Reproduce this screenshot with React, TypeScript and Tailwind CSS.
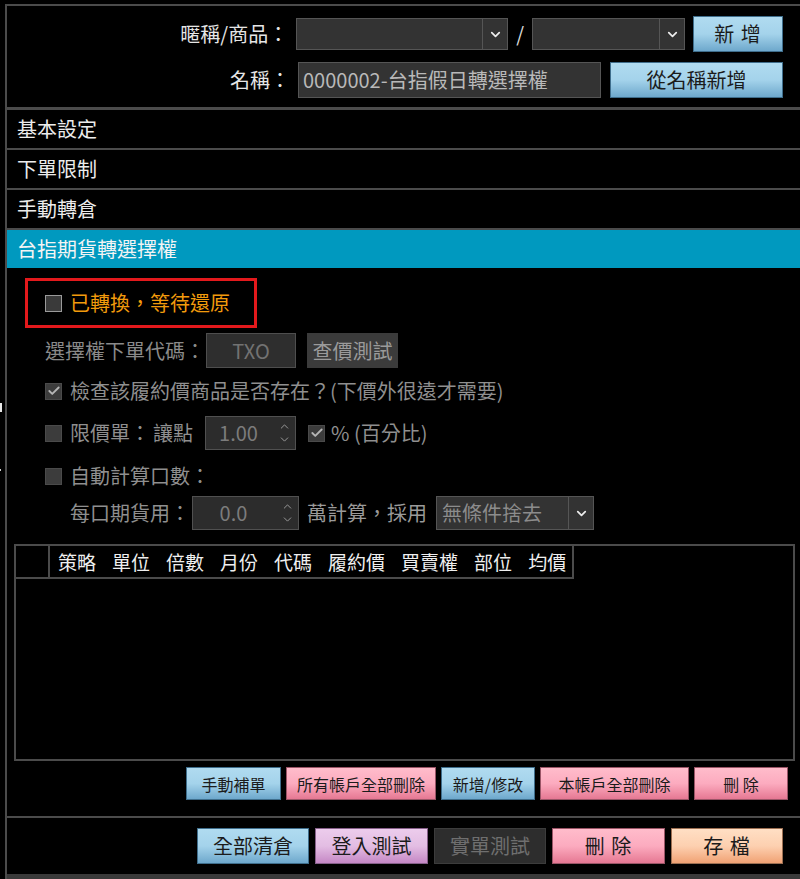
import React from 'react';
import { ChevronDown, ChevronUp, Check } from 'lucide-react';

const BTN: Record<string, string> = {
    blue: 'bg-linear-to-b from-[#b0dbf0] via-[#a4d3eb] to-[#6ea8cc] border-[#3f6e8c] text-[#1b1b1b]',
    pink: 'bg-linear-to-b from-[#ffbccb] via-[#fcabbf] to-[#e57893] border-[#9a5567] text-[#1b1b1b]',
    purple: 'bg-linear-to-b from-[#ecccec] via-[#e3bde3] to-[#c588c5] border-[#87608a] text-[#1b1b1b]',
    peach: 'bg-linear-to-b from-[#ffdfc4] via-[#fdd0b0] to-[#f0a274] border-[#9c6f52] text-[#1b1b1b]',
    dark: 'bg-[#2d2d2d] border-[#3c3c3c] text-[#6f6f6f]',
};

function Btn({ kind, className, children }: { kind: string; className: string; children: React.ReactNode }) {
    return (
        <div className={`flex shrink-0 items-center justify-center border leading-none ${BTN[kind]} ${className}`}>
            {children}
        </div>
    );
}

function Box({ checked, active }: { checked?: boolean; active?: boolean }) {
    return (
        <div
            className={`flex h-[17px] w-[17px] shrink-0 items-center justify-center border ${
                active ? 'border-[#9a9a9a] bg-[#3a3a3a]' : 'border-[#4a4a4a] bg-[#3c3c3c]'
            }`}
        >
            {checked ? <Check size={14} strokeWidth={3.2} className="text-[#b5b5b5]" /> : null}
        </div>
    );
}

function Select({ w, value }: { w: string; value?: string }) {
    return (
        <div className={`flex h-full ${w} border border-[#555] bg-[#333]`}>
            <div className="flex flex-1 items-center pl-[5px] text-[20px] leading-none text-[#8c8c8c]">{value}</div>
            <div className="flex w-[25px] items-center justify-center border-l border-[#555]">
                <ChevronDown size={15} strokeWidth={2.8} className="text-[#ececec]" />
            </div>
        </div>
    );
}

function Spin({ w, value }: { w: string; value: string }) {
    return (
        <div className={`flex h-full ${w} border border-[#505050] bg-[#2c2c2c]`}>
            <div className="flex flex-1 items-center justify-center pr-[2px] text-[20px] leading-none text-[#7c7c7c]">
                {value}
            </div>
            <div className="flex w-[22px] flex-col items-center justify-center">
                <ChevronUp size={13} strokeWidth={1.8} className="text-[#9a9a9a]" />
                <ChevronDown size={13} strokeWidth={1.8} className="text-[#9a9a9a]" />
            </div>
        </div>
    );
}

const SECTIONS = ['基本設定', '下單限制', '手動轉倉'];
const COLS = ['策略', '單位', '倍數', '月份', '代碼', '履約價', '買賣權', '部位', '均價'];

export default function App() {
    return (
        <div className="flex h-[879px] w-[800px] overflow-hidden bg-black font-['Noto_Sans_CJK_TC','Noto_Sans',sans-serif]">
            <div className="flex w-[5px] shrink-0 flex-col">
                <div className="mt-[403px] h-[9px] w-[2px] bg-[#e8e8e8]" />
                <div className="mt-[57px] h-[2px] w-[1px] bg-[#cfcfcf]" />
            </div>
            <div className="mt-[4px] flex flex-1 flex-col border-l-2 border-t-2 border-[#4b4b4b]">
                {/* header */}
                <div className="flex h-[104px] shrink-0 flex-col gap-[10px] border-b-[3px] border-[#4b4b4b] pr-[17px] pt-[10px]">
                    <div className="flex h-[36px] items-center justify-end">
                        <span className="mr-[8px] text-[20px] leading-none text-[#e6e6e6]">暱稱/商品：</span>
                        <div className="flex h-[32px] items-center">
                            <Select w="w-[212px]" />
                            <span className="mx-[8px] text-[20px] leading-none text-[#dcdcdc]">/</span>
                            <Select w="w-[153px]" />
                        </div>
                        <Btn kind="blue" className="ml-[8px] h-[36px] w-[90px] text-[20px] tracking-[1px]">
                            新 增
                        </Btn>
                    </div>
                    <div className="flex h-[36px] items-center justify-end">
                        <span className="mr-[8px] text-[20px] leading-none text-[#e6e6e6]">名稱：</span>
                        <div className="flex h-[36px] w-[303px] items-center border border-[#555] bg-[#333] pl-[4px] text-[20px] leading-none text-[#b9b9b9]">
                            0000002-台指假日轉選擇權
                        </div>
                        <Btn kind="blue" className="ml-[9px] h-[36px] w-[173px] text-[20px]">
                            從名稱新增
                        </Btn>
                    </div>
                </div>

                {/* sections */}
                {SECTIONS.map((s) => (
                    <div
                        key={s}
                        className="flex h-[40px] shrink-0 items-center border-b-2 border-[#4b4b4b] pl-[10px] text-[20px] leading-none text-[#ececec]"
                    >
                        {s}
                    </div>
                ))}
                <div className="flex h-[38px] shrink-0 items-center bg-[#0099bf] pl-[10px] text-[20px] leading-none text-[#f4f4f4]">
                    台指期貨轉選擇權
                </div>

                {/* content */}
                <div className="flex h-[550px] shrink-0 flex-col border-b-2 border-[#4b4b4b] pt-[10px]">
                    <div className="ml-[18px] flex h-[50px] w-[232px] items-center gap-[8px] border-[3px] border-[#e3191c] pl-[17px]">
                        <Box active />
                        <span className="text-[20px] leading-none text-[#f29b0c]">已轉換，等待還原</span>
                    </div>

                    <div className="ml-[38px] mt-[5px] flex h-[35px] items-center text-[20px] leading-none text-[#8a8a8a]">
                        <span className="w-[161px]">選擇權下單代碼：</span>
                        <div className="flex h-full w-[90px] items-center justify-center border border-[#4e4e4e] bg-[#2e2e2e] text-[#727272]">
                            TXO
                        </div>
                        <div className="ml-[11px] flex h-full w-[91px] items-center justify-center bg-[#3b3b3b] text-[#9a9a9a]">
                            查價測試
                        </div>
                    </div>

                    <div className="ml-[38px] mt-[2px] flex h-[42px] items-center gap-[8px] text-[20px] leading-none text-[#8f8f8f]">
                        <Box checked />
                        <span>檢查該履約價商品是否存在？(下價外很遠才需要)</span>
                    </div>

                    <div className="ml-[38px] mt-[4px] flex h-[34px] items-center text-[20px] leading-none text-[#8f8f8f]">
                        <Box />
                        <span className="ml-[8px] w-[83px]">限價單：</span>
                        <span className="w-[52px]">讓點</span>
                        <Spin w="w-[91px]" value="1.00" />
                        <div className="ml-[12px]">
                            <Box checked />
                        </div>
                        <span className="ml-[6px]">% (百分比)</span>
                    </div>

                    <div className="ml-[38px] mt-[6px] flex h-[40px] items-center gap-[8px] text-[20px] leading-none text-[#8f8f8f]">
                        <Box />
                        <span>自動計算口數：</span>
                    </div>

                    <div className="ml-[63px] flex h-[34px] items-center text-[20px] leading-none text-[#8f8f8f]">
                        <span className="w-[122px]">每口期貨用：</span>
                        <Spin w="w-[107px]" value="0.0" />
                        <span className="ml-[8px] w-[129px] text-[#9a9a9a]">萬計算，採用</span>
                        <Select w="w-[158px]" value="無條件捨去" />
                    </div>

                    {/* table */}
                    <div className="ml-[7px] mt-[14px] h-[217px] w-[781px] border-2 border-[#4b4b4b]">
                        <div className="flex h-[33px] w-[558px] border-b-2 border-r-2 border-[#4b4b4b]">
                            <div className="w-[34px] border-r-2 border-[#4b4b4b]" />
                            <div className="flex flex-1 items-center gap-[16px] pl-[8px] text-[19px] leading-none text-[#efefef]">
                                {COLS.map((c) => (
                                    <span key={c}>{c}</span>
                                ))}
                            </div>
                        </div>
                    </div>

                    <div className="mt-[6px] flex h-[33px] justify-end gap-[5px] pr-[12px] text-[16px]">
                        <Btn kind="blue" className="w-[95px]">手動補單</Btn>
                        <Btn kind="pink" className="w-[150px]">所有帳戶全部刪除</Btn>
                        <Btn kind="blue" className="w-[94px]">新增/修改</Btn>
                        <Btn kind="pink" className="w-[149px]">本帳戶全部刪除</Btn>
                        <Btn kind="pink" className="w-[94px]">刪 除</Btn>
                    </div>
                </div>

                {/* footer */}
                <div className="flex h-[56px] shrink-0 items-center justify-end gap-[6px] pr-[17px] text-[20px]">
                    <Btn kind="blue" className="h-[36px] w-[112px]">全部清倉</Btn>
                    <Btn kind="purple" className="h-[36px] w-[113px]">登入測試</Btn>
                    <Btn kind="dark" className="h-[36px] w-[112px]">實單測試</Btn>
                    <Btn kind="pink" className="h-[36px] w-[113px] tracking-[1px]">刪 除</Btn>
                    <Btn kind="peach" className="h-[36px] w-[112px] tracking-[1px]">存 檔</Btn>
                </div>
                <div className="h-[6px] shrink-0 bg-[#3a3a3a]" />
            </div>
        </div>
    );
}
